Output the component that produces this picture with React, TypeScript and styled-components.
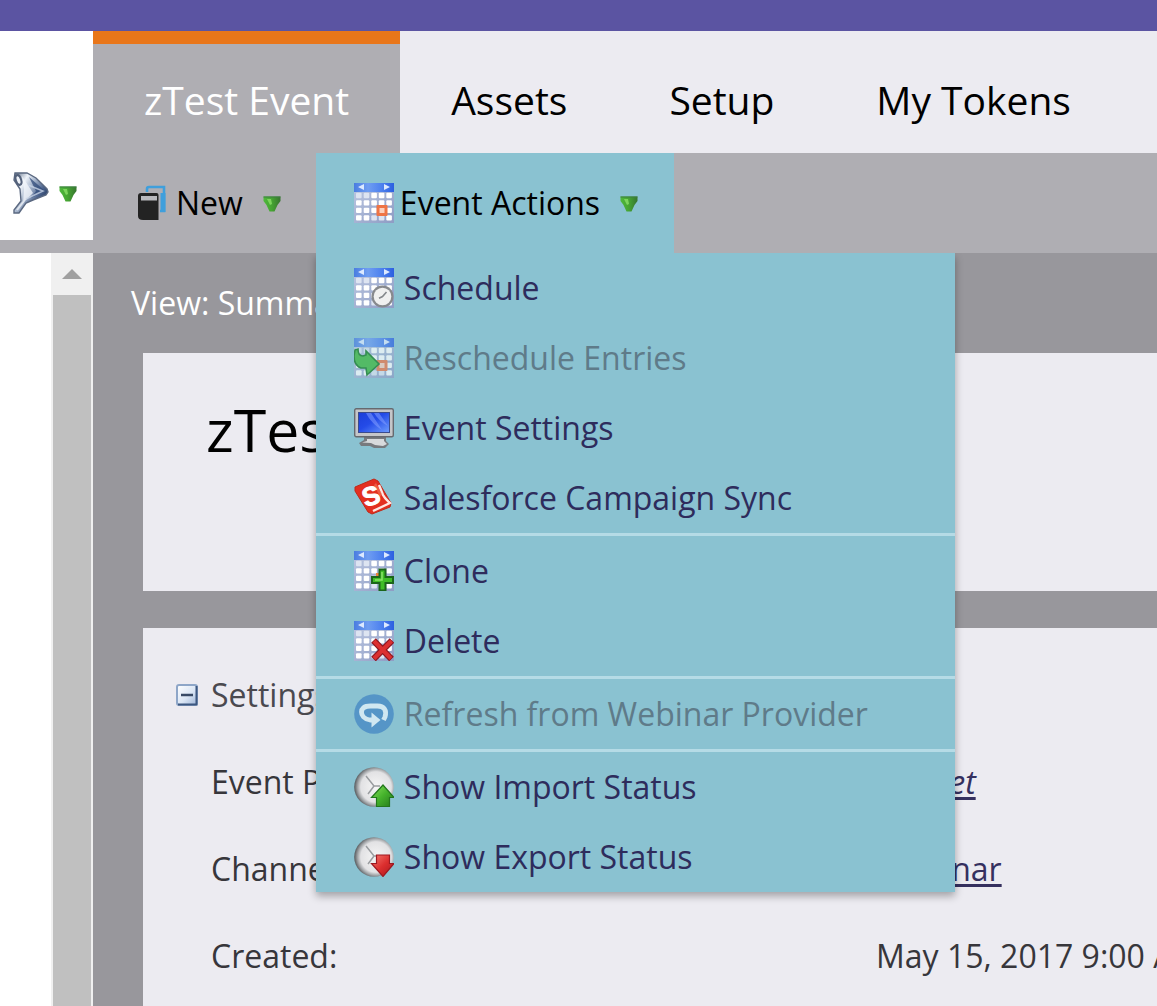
import React from "react";
import styled, { createGlobalStyle } from "styled-components";

const GlobalStyle = createGlobalStyle`
  *, *::before, *::after { box-sizing: border-box; }
  body {
    margin: 0;
    overflow-x: hidden;
    background: #ffffff;
    color: #37363b;
    font-family: "Open Sans", "Noto Sans", sans-serif;
    font-size: 32px;
    font-weight: 400;
    line-height: 44px;
  }
  button { font: inherit; color: inherit; border: 0; background: none; padding: 0; cursor: pointer; }
  svg { display: block; flex: none; }
`;

const Page = styled.div`
  display: flex;
  flex-direction: column;
  min-height: 100vh;
`;

const TopBar = styled.header`
  height: 31px;
  background: #5b54a2;
`;

const Body = styled.div`
  display: flex;
  flex: 1;
`;

const Sidebar = styled.aside`
  display: flex;
  flex-direction: column;
  width: 93px;
  flex: none;
`;

const FilterBar = styled.div`
  display: flex;
  height: 222px;
  padding: 116px 0 0 12px;
  border-bottom: 13px solid #afaeb3;
`;

const FilterButton = styled.button`
  display: flex;
  align-items: center;
  gap: 10px;
  height: 92px;
`;

const Tree = styled.div`
  display: flex;
  justify-content: flex-end;
  flex: 1;
`;

const ScrollTrack = styled.div`
  display: flex;
  flex-direction: column;
  width: 42px;
  padding: 0 2px;
  background: #f0f0f0;
`;

const ScrollUp = styled.button`
  display: flex;
  align-items: center;
  justify-content: center;
  height: 42px;
`;

const ScrollThumb = styled.div`
  flex: 1;
  background: #c0c0c0;
`;

const Main = styled.main`
  display: flex;
  flex-direction: column;
  flex: 1;
  min-width: 0;
  background: #98979c;
`;

const Tabs = styled.nav`
  display: flex;
  height: 122px;
  background: #ecebf1;
`;

const Tab = styled.button<{ $active?: boolean }>`
  padding: ${(p) => (p.$active ? "3px 51px 0" : "16px 51px 0")};
  border-top: ${(p) => (p.$active ? "13px solid #e8761a" : "0")};
  background: ${(p) => (p.$active ? "#afaeb3" : "transparent")};
  color: ${(p) => (p.$active ? "#ffffff" : "#000000")};
  font-size: 39px;
  white-space: nowrap;
`;

const Toolbar = styled.div`
  display: flex;
  height: 100px;
  padding-left: 8px;
  background: #afaeb3;
  color: #000000;
`;

const ToolButton = styled.button<{ $open?: boolean }>`
  display: flex;
  align-items: center;
  height: 100%;
  padding: ${(p) => (p.$open ? "0 36px 0 38px" : "0 35px 0 37px")};
  background: ${(p) => (p.$open ? "#8ac2d1" : "transparent")};
  white-space: nowrap;
`;

const ToolLabel = styled.span<{ $gap: number }>`
  padding: 0 20px 0 ${(p) => p.$gap}px;
`;

const MenuAnchor = styled.div`
  position: relative;
`;

const Menu = styled.div`
  position: absolute;
  z-index: 2;
  top: 100%;
  left: 0;
  width: 639px;
  background: #8ac2d1;
  box-shadow: 0 4px 8px rgba(0, 0, 0, 0.32);
  clip-path: inset(0 -20px -20px -20px);
`;

const MenuItem = styled.button`
  display: flex;
  align-items: center;
  gap: 10px;
  width: 100%;
  height: 70px;
  padding: 0 38px;
  color: #2e2c5c;
  text-align: left;
  white-space: nowrap;
  &:disabled { color: #5f7b89; cursor: default; }
  &:disabled svg { opacity: 0.7; }
`;

const Separator = styled.hr`
  height: 3px;
  margin: 0;
  border: 0;
  background: #b5dbe6;
`;

const ViewButton = styled.button`
  align-self: flex-start;
  height: 100px;
  padding-left: 38px;
  color: #ffffff;
`;

const Panels = styled.div`
  display: flex;
  flex-direction: column;
  gap: 37px;
  flex: 1;
  padding-left: 50px;
`;

const TitlePanel = styled.section`
  height: 238px;
  padding: 36px 63px;
  background: #ecebf1;
  color: #000000;
`;

const Title = styled.h1`
  margin: 0;
  font-size: 59px;
  line-height: 80px;
  font-weight: inherit;
`;

const SettingsPanel = styled.section`
  flex: 1;
  padding: 24px 0 0 33px;
  background: #ecebf1;
  overflow: hidden;
`;

const SectionHeader = styled.button`
  display: flex;
  align-items: center;
  gap: 13px;
  height: 86px;
  color: #4a494f;
`;

const Details = styled.dl`
  display: grid;
  grid-template-columns: 665px 1fr;
  grid-auto-rows: 87px;
  align-items: center;
  margin: 0;
  padding-left: 35px;
  white-space: nowrap;
`;

const Value = styled.dd`
  margin: 0;
  min-width: 0;
  overflow: hidden;
`;

const ValueLink = styled.a<{ $unset?: boolean }>`
  color: #35305f;
  font-style: ${(p) => (p.$unset ? "italic" : "normal")};
  text-decoration-thickness: 3px;
  text-underline-offset: 3px;
`;

const Gradients = () => (
  <svg width="0" height="0" style={{ position: "absolute" }} aria-hidden="true">
    <defs>
      <linearGradient id="calHead"><stop offset="0" stopColor="#4a7de0" /><stop offset=".35" stopColor="#6f9df2" /><stop offset=".7" stopColor="#4c80ee" /><stop offset="1" stopColor="#2c5fe0" /></linearGradient>
      <linearGradient id="calBody" x1="0" y1="0" x2="1" y2="1"><stop offset="0" stopColor="#bcc8e2" /><stop offset="1" stopColor="#8e9cc4" /></linearGradient>
      <linearGradient id="green" x1="0" y1="0" x2="1" y2="1"><stop offset="0" stopColor="#8be05c" /><stop offset=".5" stopColor="#45b32c" /><stop offset="1" stopColor="#23761b" /></linearGradient>
      <linearGradient id="caret"><stop offset="0" stopColor="#4fb83c" /><stop offset=".5" stopColor="#45a332" /><stop offset="1" stopColor="#37752f" /></linearGradient>
      <linearGradient id="red" x1="0" y1="0" x2="1" y2="1"><stop offset="0" stopColor="#f47a70" /><stop offset=".5" stopColor="#dc2f2f" /><stop offset="1" stopColor="#a8141b" /></linearGradient>
      <linearGradient id="screen" x1="0" y1="0" x2="1" y2="1"><stop offset="0" stopColor="#1c3ed8" /><stop offset=".45" stopColor="#244be8" /><stop offset="1" stopColor="#6e9dff" /></linearGradient>
      <linearGradient id="metal" x1="0" y1="0" x2="1" y2=".7"><stop offset="0" stopColor="#56667f" /><stop offset=".3" stopColor="#eef3f9" /><stop offset=".5" stopColor="#a5b4cb" /><stop offset=".75" stopColor="#4b628b" /><stop offset="1" stopColor="#1e3358" /></linearGradient>
      <linearGradient id="toggle" x1="0" y1="0" x2="1" y2="1"><stop offset="0" stopColor="#ffffff" /><stop offset=".55" stopColor="#dbe6f5" /><stop offset="1" stopColor="#9bb3d6" /></linearGradient>
      <radialGradient id="dial" cx=".55" cy=".5" r=".55"><stop offset="0" stopColor="#f6f6f6" /><stop offset=".7" stopColor="#e2e2e4" /><stop offset=".84" stopColor="#a4a7aa" /><stop offset="1" stopColor="#54575a" /></radialGradient>
    </defs>
  </svg>
);

const Caret = () => (
  <svg width="18" height="18" viewBox="0 -2 18 18" aria-hidden="true">
    <path d="M.5 .5h17v4.500L14.500 9l-3 6.500h-5L3.500 9l-3-4z" fill="url(#caret)" />
    <path d="M4 3h4l1 5-2 1z" fill="#8fe36b" opacity=".75" />
    <path d="M.5 1h17" stroke="#3f7f45" strokeWidth="1" />
  </svg>
);

const cellX = [2, 9.7, 17.3, 24.8, 32.3];
const cellY = [9.8, 17.2, 24.7, 32.2];

const Calendar = ({ children }: { children?: React.ReactNode }) => (
  <svg width="40" height="40" viewBox="0 0 40 40" aria-hidden="true">
    <rect width="40" height="40" fill="url(#calBody)" />
    <rect width="40" height="9" fill="url(#calHead)" />
    <path d="M10 1v6L4 4zM30 1v6l6-3z" fill="#dce9ff" />
    {cellY.map((y, r) =>
      cellX.map((x, c) => (
        <rect key={`${r}-${c}`} x={x} y={y} width="5.6" height="5.4" rx="1" fill={(r === 0 && c < 2) || (r === 3 && c > 1 && c < 4) ? "#dde4f1" : "#ffffff"} />
      ))
    )}
    {children}
  </svg>
);

const DayMark = () => (
  <>
    <rect x="22.5" y="22" width="11" height="11" rx="1" fill="#ee7445" />
    <rect x="25.5" y="25" width="5" height="5" fill="#fbd0bd" />
  </>
);

const ClockMark = () => (
  <>
    <circle cx="28.5" cy="28.5" r="11" fill="#87898d" />
    <circle cx="28.5" cy="28.5" r="8.8" fill="#f0f0f0" />
    <path d="M32.5 24l-4 4.5-3.500 1.700" fill="none" stroke="#85888c" strokeWidth="1.6" />
  </>
);

const MoveMark = () => (
  <path d="M1 12l3-1c0 5 2 7 5 7l3-1v-4l13 13-12 11-1-7H7c-5-2-7-6-7-12z" fill="#3db83a" stroke="#12771f" strokeWidth="1.6" />
);

const PlusMark = () => (
  <>
    <path d="M22 22h5v5h-5z" fill="#e9823b" />
    <path d="M25.5 18.5h6v7.500h7.500v6h-7.500v7.500h-6V32H18v-6h7.500z" fill="#40bd27" stroke="#1b651a" strokeWidth="2" />
    <path d="M28 21v8h-7" fill="none" stroke="#8be46b" strokeWidth="1.5" />
  </>
);

const CrossMark = () => (
  <>
    <path d="M19.500 19.500l18 18.500M38 19.500L19.500 38" stroke="#8e1720" strokeWidth="6.500" />
    <path d="M20 20l17 17.500M37.500 20L20 37.500" stroke="#dc3031" strokeWidth="4" />
  </>
);

const Monitor = () => (
  <svg width="40" height="40" viewBox="0 0 40 40" aria-hidden="true">
    <path d="M10 29h22v4l3 3-4 4H20l-4-2H7l-2-3 5-3z" fill="#777a7e" />
    <path d="M13 31h17v2l3 3-4 2-8-1-4-2-9-.5 5-1.500z" fill="#d8dadc" />
    <rect x=".7" y=".7" width="38.600" height="28" rx="1.500" fill="#c5c6c9" stroke="#66696f" strokeWidth="1.4" />
    <rect x="4.500" y="4.500" width="31" height="20" fill="url(#screen)" stroke="#3a4b8c" strokeWidth="1" />
    <path d="M12 5h5l11 17c-7-4-13-11-16-17zM20 5h5l9 13c-6-3-11-8-14-13z" fill="#829dff" opacity=".55" />
  </svg>
);

const Salesforce = () => (
  <svg width="40" height="40" viewBox="0 0 40 40" aria-hidden="true">
    <path d="M1 9L20 1l4 2 13 22-1 4-18 7-4-2L1 13z" fill="#e32f20" stroke="#bf2919" strokeWidth="1" />
    <path d="M25 7l4 10c2 4 5 6 7 8l-17 8" fill="none" stroke="#ffe7e2" strokeWidth="2.400" />
    <path d="M22 5l6 11-2 3-6-12z" fill="#f4795c" opacity=".6" />
    <text x="17" y="27" textAnchor="middle" transform="rotate(-18 17 18)" fill="#ffffff" stroke="#ffffff" strokeWidth="1" fontFamily="Liberation Sans, sans-serif" fontWeight="700" fontSize="26">S</text>
  </svg>
);

const Refresh = () => (
  <svg width="40" height="40" viewBox="0 0 40 40" aria-hidden="true">
    <circle cx="20" cy="20" r="19.800" fill="#3f83c4" />
    <path d="M29.500 26l1.500-3c2-7-1-11-7.500-11h-7c-7 0-9 3-9 6s2 7 8.500 8h3" fill="none" stroke="#eef7ff" strokeWidth="4.800" />
    <path d="M17.500 18.500l9 7.500-9 7.500z" fill="#eef7ff" />
  </svg>
);

const StatusDial = ({ down }: { down?: boolean }) => (
  <svg width="40" height="40" viewBox="0 0 40 40" aria-hidden="true">
    <circle cx="20" cy="20" r="19.800" fill="url(#dial)" />
    <path d="M12 9l8 10h6M20 19l-6 8" fill="none" stroke="#9a9da0" strokeWidth="1.500" />
    {down ? (
      <path d="M22.500 18h13v8.500h4.500L29 39.500 17.500 26.500h5z" fill="url(#red)" stroke="#9e1921" strokeWidth="1.200" />
    ) : (
      <path d="M29 18l11 12.500h-4.500v9h-13v-9h-5z" fill="url(#green)" stroke="#23771d" strokeWidth="1.200" />
    )}
  </svg>
);

const Funnel = () => (
  <svg width="37" height="42" viewBox="0 0 37 42" aria-hidden="true">
    <path d="M3 1h12l9 5 11 11 1 3-2 3-13 5-7 3-7 10H2v-3l7-9-1-12L2 8z" fill="url(#metal)" stroke="#5a6880" strokeWidth="1.400" />
    <path d="M10 4l11 17-10 10 1-14z" fill="#f3f6fb" opacity=".8" />
    <path d="M17 5l16 14-14 7 5-7z" fill="#304b79" opacity=".75" />
    <path d="M16 13l15 6-17 8" fill="none" stroke="#c9d4e6" strokeWidth="1.500" opacity=".8" />
    <ellipse cx="6.500" cy="8" rx="2.600" ry="5" transform="rotate(-18 6.5 8)" fill="#eef2f8" stroke="#53617a" strokeWidth="2" />
    <path d="M5 38l7-9" stroke="#dfe5ee" strokeWidth="2" />
  </svg>
);

const NewIcon = () => (
  <svg width="28" height="36" viewBox="0 0 28 36" aria-hidden="true">
    <path d="M9 7V4q0-2 2-2h15v24h-4" fill="none" stroke="#3f9fdc" strokeWidth="2.600" />
    <path d="M22.500 8h5v19h-5z" fill="#3f9fdc" />
    <path d="M3 8h15.500q2 0 2 2v25H5q-5 0-5-4V11q0-3 3-3z" fill="#232323" />
    <rect x="3" y="11" width="16" height="4.500" fill="#b9b9bd" />
  </svg>
);

const Toggle = () => (
  <svg width="22" height="22" viewBox="0 0 22 22" aria-hidden="true">
    <rect x="1" y="1" width="20" height="20" rx="2" fill="url(#toggle)" stroke="#8ea6c8" strokeWidth="2" />
    <path d="M20.500 2v18.500H2" fill="none" stroke="#3c5780" strokeWidth="2" />
    <path d="M5 11h12" stroke="#384a66" strokeWidth="2.500" />
  </svg>
);

type Entry = { label: string; icon: React.ReactNode; disabled?: boolean };

const groups: Entry[][] = [
  [
    { label: "Schedule", icon: <Calendar><ClockMark /></Calendar> },
    { label: "Reschedule Entries", icon: <Calendar><DayMark /><MoveMark /></Calendar>, disabled: true },
    { label: "Event Settings", icon: <Monitor /> },
    { label: "Salesforce Campaign Sync", icon: <Salesforce /> },
  ],
  [
    { label: "Clone", icon: <Calendar><PlusMark /></Calendar> },
    { label: "Delete", icon: <Calendar><CrossMark /></Calendar> },
  ],
  [{ label: "Refresh from Webinar Provider", icon: <Refresh />, disabled: true }],
  [
    { label: "Show Import Status", icon: <StatusDial /> },
    { label: "Show Export Status", icon: <StatusDial down /> },
  ],
];

export default function App() {
  return (
    <Page>
      <GlobalStyle />
      <Gradients />
      <TopBar />
      <Body>
        <Sidebar>
          <FilterBar>
            <FilterButton aria-label="Filter"><Funnel /><Caret /></FilterButton>
          </FilterBar>
          <Tree>
            <ScrollTrack>
              <ScrollUp aria-label="Scroll up">
                <svg width="20" height="10" viewBox="0 0 20 10" aria-hidden="true"><path d="M0 10L10 0l10 10z" fill="#a0a0a0" /></svg>
              </ScrollUp>
              <ScrollThumb />
            </ScrollTrack>
          </Tree>
        </Sidebar>
        <Main>
          <Tabs>
            <Tab $active>zTest Event</Tab>
            <Tab>Assets</Tab>
            <Tab>Setup</Tab>
            <Tab>My Tokens</Tab>
          </Tabs>
          <Toolbar>
            <ToolButton>
              <NewIcon />
              <ToolLabel $gap={10}>New</ToolLabel>
              <Caret />
            </ToolButton>
            <MenuAnchor>
              <ToolButton $open aria-haspopup="menu" aria-expanded="true">
                <Calendar><DayMark /></Calendar>
                <ToolLabel $gap={6}>Event Actions</ToolLabel>
                <Caret />
              </ToolButton>
              <Menu role="menu">
                {groups.map((group, i) => (
                  <React.Fragment key={i}>
                    {i > 0 && <Separator />}
                    {group.map((item) => (
                      <MenuItem key={item.label} role="menuitem" disabled={item.disabled}>
                        {item.icon}
                        <span>{item.label}</span>
                      </MenuItem>
                    ))}
                  </React.Fragment>
                ))}
              </Menu>
            </MenuAnchor>
          </Toolbar>
          <ViewButton>View: Summary</ViewButton>
          <Panels>
            <TitlePanel>
              <Title>zTest Event</Title>
            </TitlePanel>
            <SettingsPanel>
              <SectionHeader aria-expanded="true"><Toggle />Settings</SectionHeader>
              <Details>
                <dt>Event Partner:</dt>
                <Value><ValueLink $unset href="#partner">Not set</ValueLink></Value>
                <dt>Channel:</dt>
                <Value><ValueLink href="#channel">Webinar</ValueLink></Value>
                <dt>Created:</dt>
                <Value>May 15, 2017 9:00 AM</Value>
              </Details>
            </SettingsPanel>
          </Panels>
        </Main>
      </Body>
    </Page>
  );
}
